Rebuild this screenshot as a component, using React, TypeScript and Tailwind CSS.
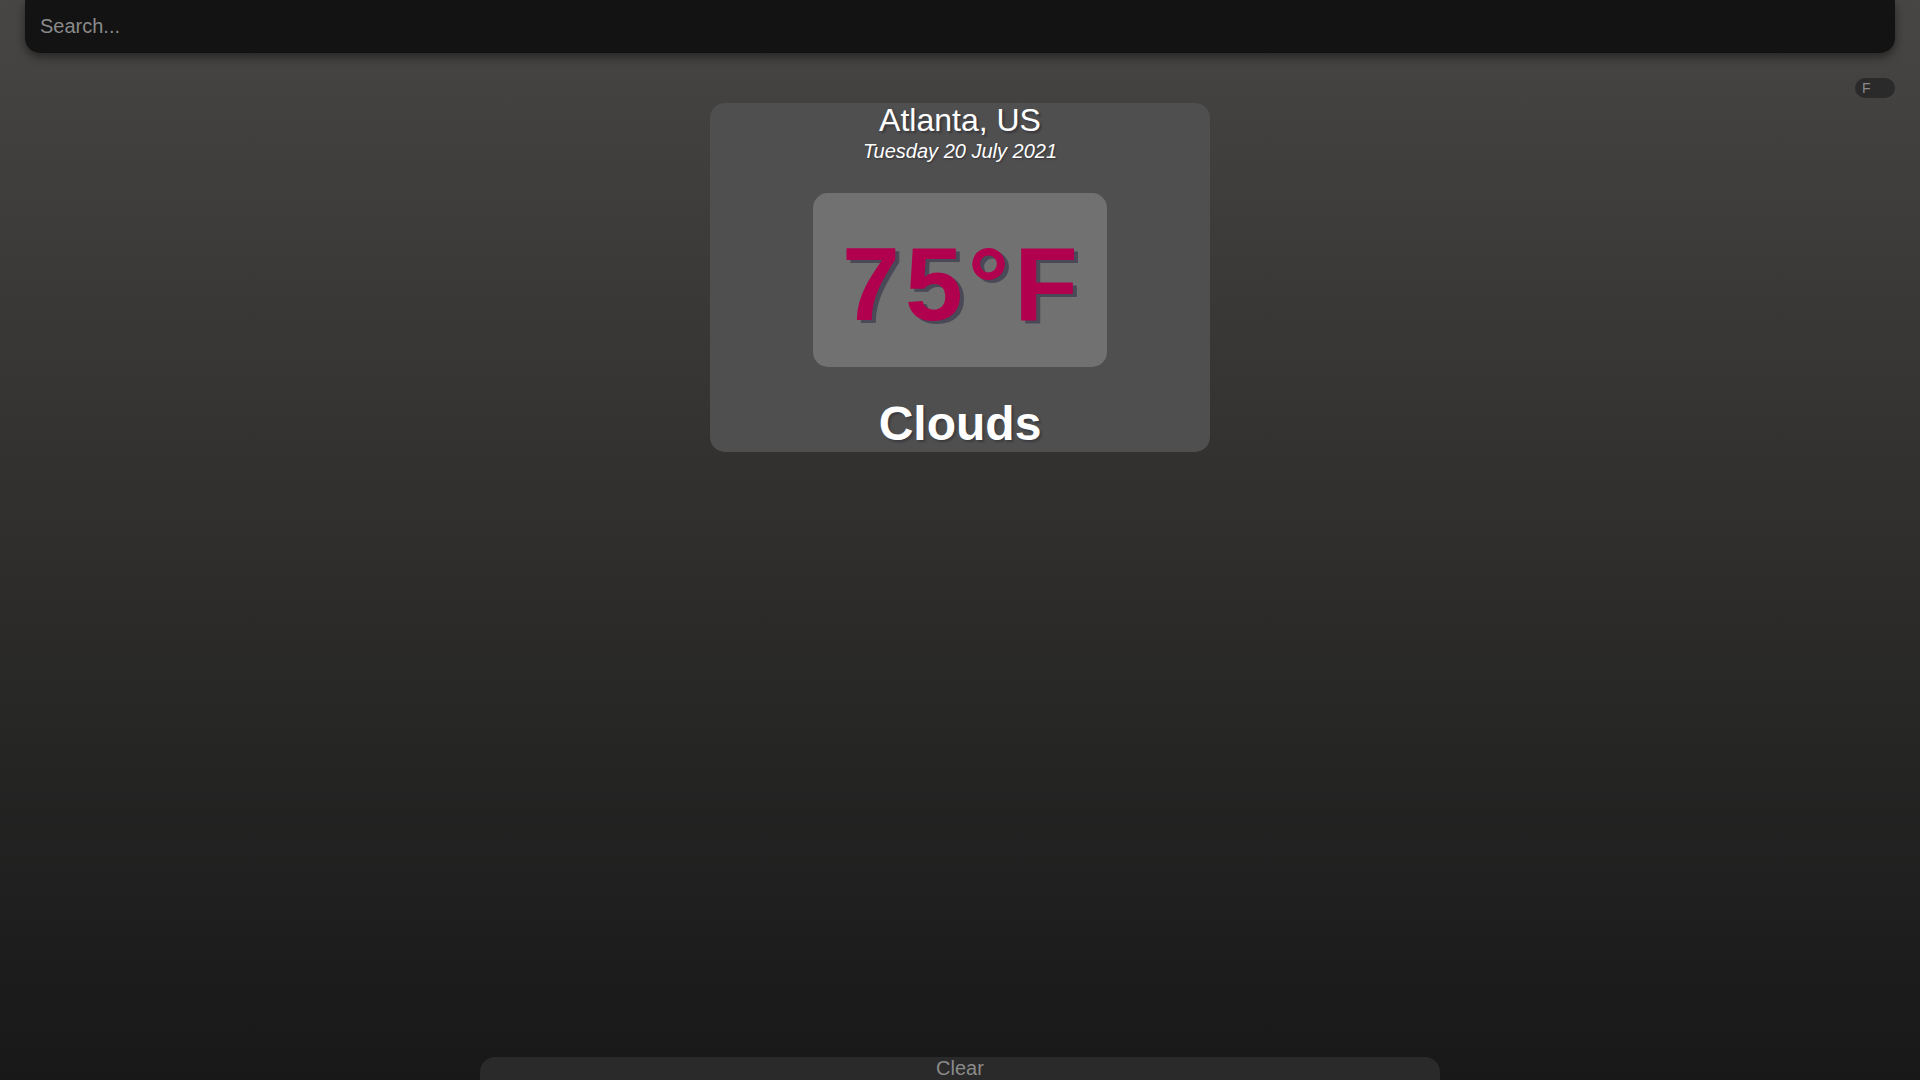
import React from "react";

export default function App() {
  return (
    <div
      className="h-screen w-full overflow-hidden flex flex-col bg-gradient-to-b from-[#484644] to-[#181818]"
      style={{ fontFamily: '"Liberation Sans", Arial, sans-serif' }}
    >
      <div className="mx-[25px] h-[53px] shrink-0 rounded-b-[15px] bg-[#131313] shadow-[0_4px_10px_rgba(0,0,0,0.45)] flex items-center px-[15px] pb-[2px]">
        <input
          className="w-full bg-transparent text-[20px] text-[#cccccc] placeholder:text-[#8a8a8a] outline-none"
          placeholder="Search..."
        />
      </div>

      <div className="flex justify-end mr-[25px] mt-[25px]">
        <div className="w-[40px] h-[20px] rounded-full bg-[#2a2a2a] flex items-center pl-[7px] text-[14px] leading-none text-[#8a8a8a]">
          F
        </div>
      </div>

      <div className="mx-auto mt-[5px] w-[500px] rounded-[15px] bg-[#4f4f4f] flex flex-col items-center pt-0 pb-px">
        <div className="text-[32px] leading-[34px] text-white [text-shadow:2px_2px_2px_rgba(40,40,50,0.6)]">
          Atlanta, US
        </div>
        <div className="mt-[3px] text-[20px] leading-[22px] italic text-white [text-shadow:1px_1px_2px_rgba(40,40,50,0.7)]">
          Tuesday 20 July 2021
        </div>
        <div className="mt-[31px] w-[294px] h-[174px] rounded-[15px] bg-[#717171] flex items-center justify-center">
          <span className="text-[104px] font-bold leading-none tracking-[5px] pl-[5px] text-[#b0004e] pt-[8px] [text-shadow:4px_3px_0_rgba(60,60,80,0.75)]">
            75°F
          </span>
        </div>
        <div className="mt-[30px] text-[48px] leading-[54px] font-bold text-white [text-shadow:2px_2px_2px_rgba(40,40,50,0.5)]">
          Clouds
        </div>
      </div>

      <div className="flex-1" />

      <div className="mx-auto w-[960px] h-[23px] shrink-0 rounded-t-[15px] bg-[#2a2a2a] flex justify-center">
        <span className="text-[20px] leading-[22px] text-[#8a8a8a]">Clear</span>
      </div>
    </div>
  );
}
